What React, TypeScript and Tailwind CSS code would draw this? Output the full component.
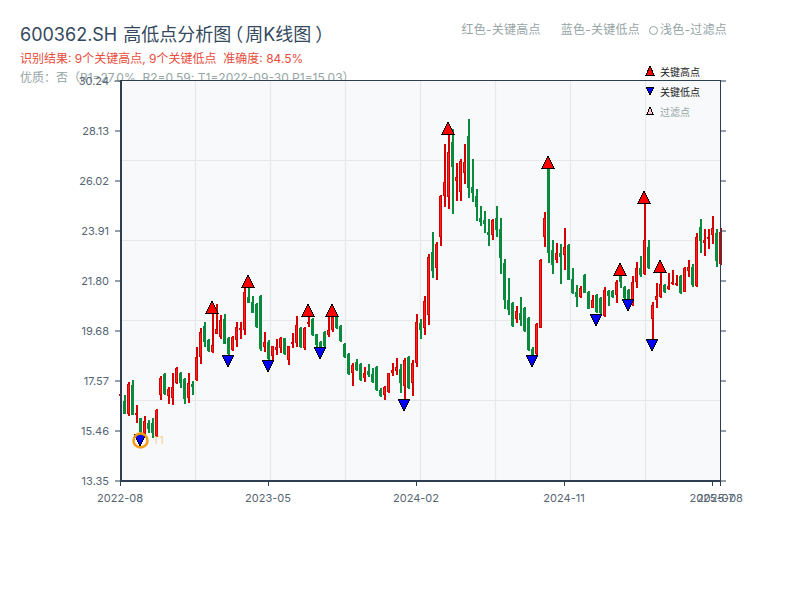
const candles: [string, number, number, number, number][] = [
  ['r', 393, 396, 394, 395], ['g', 395, 414, 401, 414], ['r', 382, 416, 384, 414], ['g', 380, 415, 385, 415],
  ['r', 405, 423, 413, 415], ['g', 418, 437, 418, 432], ['r', 416, 435, 421, 433], ['g', 420, 433, 423, 429],
  ['g', 418, 438, 423, 433], ['r', 409, 437, 410, 436], ['r', 376, 400, 378, 395], ['g', 373, 395, 374, 394],
  ['r', 387, 404, 389, 396], ['r', 373, 405, 387, 398], ['r', 367, 384, 368, 383], ['g', 372, 388, 373, 383],
  ['g', 378, 404, 379, 399], ['r', 373, 403, 383, 398], ['g', 381, 395, 384, 387], ['r', 347, 381, 357, 380],
  ['r', 328, 364, 332, 357], ['g', 322, 347, 326, 342], ['g', 339, 352, 340, 351], ['r', 312, 353, 345, 352],
  ['r', 304, 334, 329, 334], ['r', 315, 339, 320, 337], ['g', 314, 344, 319, 344], ['g', 337, 355, 338, 354],
  ['r', 336, 351, 337, 350], ['r', 322, 347, 327, 340], ['r', 322, 339, 328, 329], ['r', 287, 335, 292, 330],
  ['g', 287, 303, 297, 303], ['g', 296, 313, 302, 313], ['g', 303, 328, 304, 327], ['g', 295, 351, 296, 349],
  ['r', 332, 352, 342, 347], ['g', 340, 360, 342, 359], ['r', 346, 360, 346, 356], ['r', 339, 355, 347, 350],
  ['r', 337, 353, 338, 348], ['g', 338, 355, 338, 354], ['r', 346, 365, 346, 360], ['r', 333, 348, 342, 343],
  ['r', 316, 347, 325, 343], ['g', 327, 348, 328, 347], ['r', 327, 350, 328, 348], ['r', 316, 327, 322, 324],
  ['g', 318, 336, 319, 335], ['g', 334, 347, 334, 345], ['g', 341, 347, 342, 347], ['g', 331, 347, 332, 346],
  ['r', 316, 337, 330, 335], ['r', 316, 332, 317, 330], ['g', 315, 329, 316, 328], ['g', 325, 342, 326, 341],
  ['g', 343, 358, 344, 357], ['g', 353, 375, 354, 374], ['r', 363, 386, 365, 373], ['g', 359, 371, 362, 370],
  ['g', 363, 381, 364, 380], ['r', 367, 382, 373, 378], ['g', 364, 377, 371, 375], ['g', 368, 383, 374, 382],
  ['g', 366, 391, 367, 390], ['g', 388, 397, 390, 396], ['r', 386, 400, 387, 395], ['r', 373, 393, 373, 392],
  ['r', 363, 376, 370, 373], ['r', 358, 375, 367, 371], ['g', 364, 393, 369, 383], ['r', 358, 400, 360, 386],
  ['g', 356, 389, 357, 388], ['r', 360, 396, 363, 383], ['r', 314, 367, 322, 363], ['g', 319, 339, 323, 330],
  ['r', 296, 335, 301, 328], ['r', 254, 325, 257, 315], ['g', 232, 278, 252, 271], ['r', 242, 280, 244, 268],
  ['r', 195, 246, 196, 237], ['r', 144, 207, 182, 196], ['r', 133, 209, 152, 197], ['g', 129, 214, 142, 167],
  ['r', 163, 201, 177, 181], ['r', 159, 201, 161, 192], ['r', 144, 184, 162, 173], ['g', 119, 198, 136, 188],
  ['g', 159, 202, 187, 193], ['g', 189, 221, 196, 207], ['g', 206, 226, 218, 222], ['g', 211, 233, 220, 224],
  ['g', 219, 246, 232, 235], ['r', 219, 240, 220, 235], ['g', 206, 237, 218, 230], ['g', 218, 274, 229, 258],
  ['g', 259, 309, 263, 300], ['g', 278, 315, 300, 310], ['g', 302, 327, 303, 326], ['r', 306, 323, 311, 319],
  ['g', 297, 326, 313, 320], ['g', 307, 332, 308, 331], ['g', 317, 351, 318, 350], ['g', 347, 355, 349, 355],
  ['r', 323, 355, 324, 354], ['r', 259, 328, 260, 328], ['r', 212, 247, 218, 237], ['g', 167, 263, 168, 253],
  ['g', 240, 274, 250, 265], ['r', 243, 263, 253, 260], ['g', 244, 284, 253, 257], ['r', 228, 270, 247, 255],
  ['g', 244, 280, 245, 280], ['g', 268, 294, 279, 293], ['g', 285, 307, 292, 297], ['r', 286, 298, 288, 297],
  ['g', 274, 293, 275, 293], ['g', 291, 309, 292, 309], ['r', 295, 308, 300, 308], ['g', 294, 313, 295, 312],
  ['g', 297, 315, 298, 313], ['r', 287, 317, 290, 316], ['g', 290, 306, 291, 296], ['g', 290, 298, 291, 297],
  ['r', 280, 303, 282, 295], ['g', 273, 288, 275, 282], ['g', 286, 299, 287, 298], ['g', 289, 300, 290, 299],
  ['r', 276, 306, 282, 305], ['r', 262, 288, 268, 282], ['g', 256, 277, 268, 275], ['r', 203, 275, 240, 274],
  ['g', 240, 269, 247, 268], ['r', 302, 340, 305, 319], ['r', 283, 308, 296, 300], ['r', 272, 298, 284, 297],
  ['g', 284, 293, 285, 292], ['r', 273, 290, 286, 289], ['r', 270, 285, 282, 284], ['r', 275, 286, 283, 285],
  ['g', 275, 294, 276, 293], ['r', 267, 292, 268, 292], ['r', 260, 277, 267, 271], ['g', 264, 287, 267, 285],
  ['r', 233, 287, 237, 286], ['g', 219, 253, 227, 241], ['r', 229, 256, 240, 243], ['r', 229, 249, 237, 239],
  ['r', 216, 244, 228, 235], ['g', 229, 267, 233, 261], ['r', 228, 265, 232, 264],
]

const highs = [[212, 301], [248, 275], [308, 304], [332, 304], [448, 122], [548, 156], [620, 263], [644, 191], [660, 260]]
const lows = [[140, 434], [228, 355], [268, 360], [320, 347], [404, 399], [532, 355], [596, 314], [628, 299], [652, 339]]

const yLabels = ['30.24', '28.13', '26.02', '23.91', '21.80', '19.68', '17.57', '15.46', '13.35']
const xTicks = [[120, '2022-08'], [268, '2023-05'], [416, '2024-02'], [564, '2024-11'], [712, '2025-07'], [720, '2025-08']] as const

export default function App() {
  return (
    <div className="w-[800px] h-[600px] bg-white overflow-hidden font-['Inter','Noto_Sans_CJK_SC',sans-serif]">
      <div className="h-[60px] pl-5 pt-[23px]">
        <div className="flex items-start justify-between pr-[73px] h-[27px]">
          <h1 className="text-[18px] leading-6 font-normal text-[#34495e] whitespace-pre">
            <span>600362.SH</span>
            <span className="ml-[6px]">高低点分析图</span>
            <span className="-ml-[6px] mr-[2px]">（</span>
            周K线图
            <span className="ml-[4px]">）</span>
          </h1>
          <div className="flex items-center text-xs leading-[14px] tracking-[0.25px] text-[#95a5a6]">
            <span>红色-关键高点</span>
            <span className="ml-[20px]">蓝色-关键低点</span>
            <span className="ml-[9px] mr-[2px] w-[9px] h-[9px] rounded-full border border-[#95a5a6]"></span>
            <span>浅色-过滤点</span>
          </div>
        </div>
        <p className="text-xs leading-[18px] text-[#e74c3c] whitespace-pre">识别结果: 9个关键高点, 9个关键低点  准确度: 84.5%</p>
        <p className="mt-px text-xs leading-[18px] text-[#95a5a6] whitespace-pre">优质：否（R1=27.0%, R2=0.59; T1=2022-09-30 P1=15.03）</p>
      </div>
      <svg className="relative block" width="800" height="540" viewBox="0 60 800 540">
        <rect x="121" y="81" width="600" height="400" className="fill-[#f8f9fa]" />
        {[195.5, 270.5, 345.5, 420.5, 495.5, 570.5, 645.5].map((x) => (
          <line key={x} x1={x} x2={x} y1="81" y2="481" strokeWidth="1.2" className="stroke-[#e6e8ec]" />
        ))}
        {[160.5, 240.5, 320.5, 400.5].map((y) => (
          <line key={y} x1="121" x2="721" y1={y} y2={y} strokeWidth="1.2" className="stroke-[#e6e8ec]" />
        ))}

        <g shapeRendering="crispEdges">
          {candles.map(([c, hi, lo, top, bot], i) => {
            const x = 120 + i * 4
            return (
              <g key={i}>
                <line
                  x1={x + 1}
                  x2={x + 1}
                  y1={hi}
                  y2={lo}
                  strokeWidth="2"
                  className={c === 'r' ? 'stroke-[#d40000]' : 'stroke-[#0a8a3c]'}
                />
                <rect
                  x={x - 0.5}
                  y={top + 0.5}
                  width="2"
                  height={Math.max(bot - top - 1, 1)}
                  strokeWidth="1"
                  className={c === 'r' ? 'fill-[#ff2020] stroke-[#d40000]' : 'fill-[#0a8a3c] stroke-[#0a8a3c]'}
                />
              </g>
            )
          })}

          {highs.map(([x, y]) => (
            <polygon key={x} points={`${x},${y} ${x + 6},${y + 12} ${x - 6},${y + 12}`} className="fill-[#ff0000] stroke-black" />
          ))}
          {lows.map(([x, y]) => (
            <polygon key={x} points={`${x - 6},${y} ${x + 6},${y} ${x},${y + 12}`} className="fill-[#0000ff] stroke-black" />
          ))}
        </g>
        <circle cx="140.5" cy="440.5" r="7" strokeWidth="2.5" className="fill-none stroke-[#f39c12]" />
        <text x="153" y="444" className="text-[10px] fill-[#f39c12] opacity-50">T1</text>

        {yLabels.map((label, i) => (
          <g key={label}>
            <line x1="115" x2="121" y1={81 + i * 50} y2={81 + i * 50} className="stroke-[#2c3e50]" />
            <line x1="721" x2="726" y1={81 + i * 50} y2={81 + i * 50} className="stroke-[#2c3e50]" />
            <text x="109" y={85 + i * 50} textAnchor="end" className="text-[11px] fill-[#566573]">{label}</text>
          </g>
        ))}
        {xTicks.map(([x, label]) => (
          <g key={label}>
            <line x1={x + 0.5} x2={x + 0.5} y1="481" y2="486" className="stroke-[#2c3e50]" />
            <text x={x} y="502" textAnchor="middle" className="text-[11px] fill-[#566573]">{label}</text>
          </g>
        ))}

        <line x1="121" x2="721" y1="80.5" y2="80.5" className="stroke-[#2c3e50]" />
        <line x1="720.5" x2="720.5" y1="81" y2="481" className="stroke-[#2c3e50]" />
        <line x1="121" x2="121" y1="80" y2="482" strokeWidth="2" className="stroke-[#2c3e50]" />
        <line x1="120" x2="721" y1="481" y2="481" strokeWidth="2" className="stroke-[#2c3e50]" />

        <g shapeRendering="crispEdges">
          <polygon points="650,66 654,75 646,75" className="fill-[#ff0000] stroke-black" />
          <polygon points="646,87 654,87 650,95" className="fill-[#0000ff] stroke-black" />
          <polygon points="650,107 653,114 647,114" className="fill-[#ffc0cb] stroke-black" />
        </g>
        <text x="660" y="76" className="text-[10px] fill-[#222222]">关键高点</text>
        <text x="660" y="96" className="text-[10px] fill-[#222222]">关键低点</text>
        <text x="660" y="116" className="text-[10px] fill-[#95a5a6]">过滤点</text>
      </svg>
    </div>
  )
}
